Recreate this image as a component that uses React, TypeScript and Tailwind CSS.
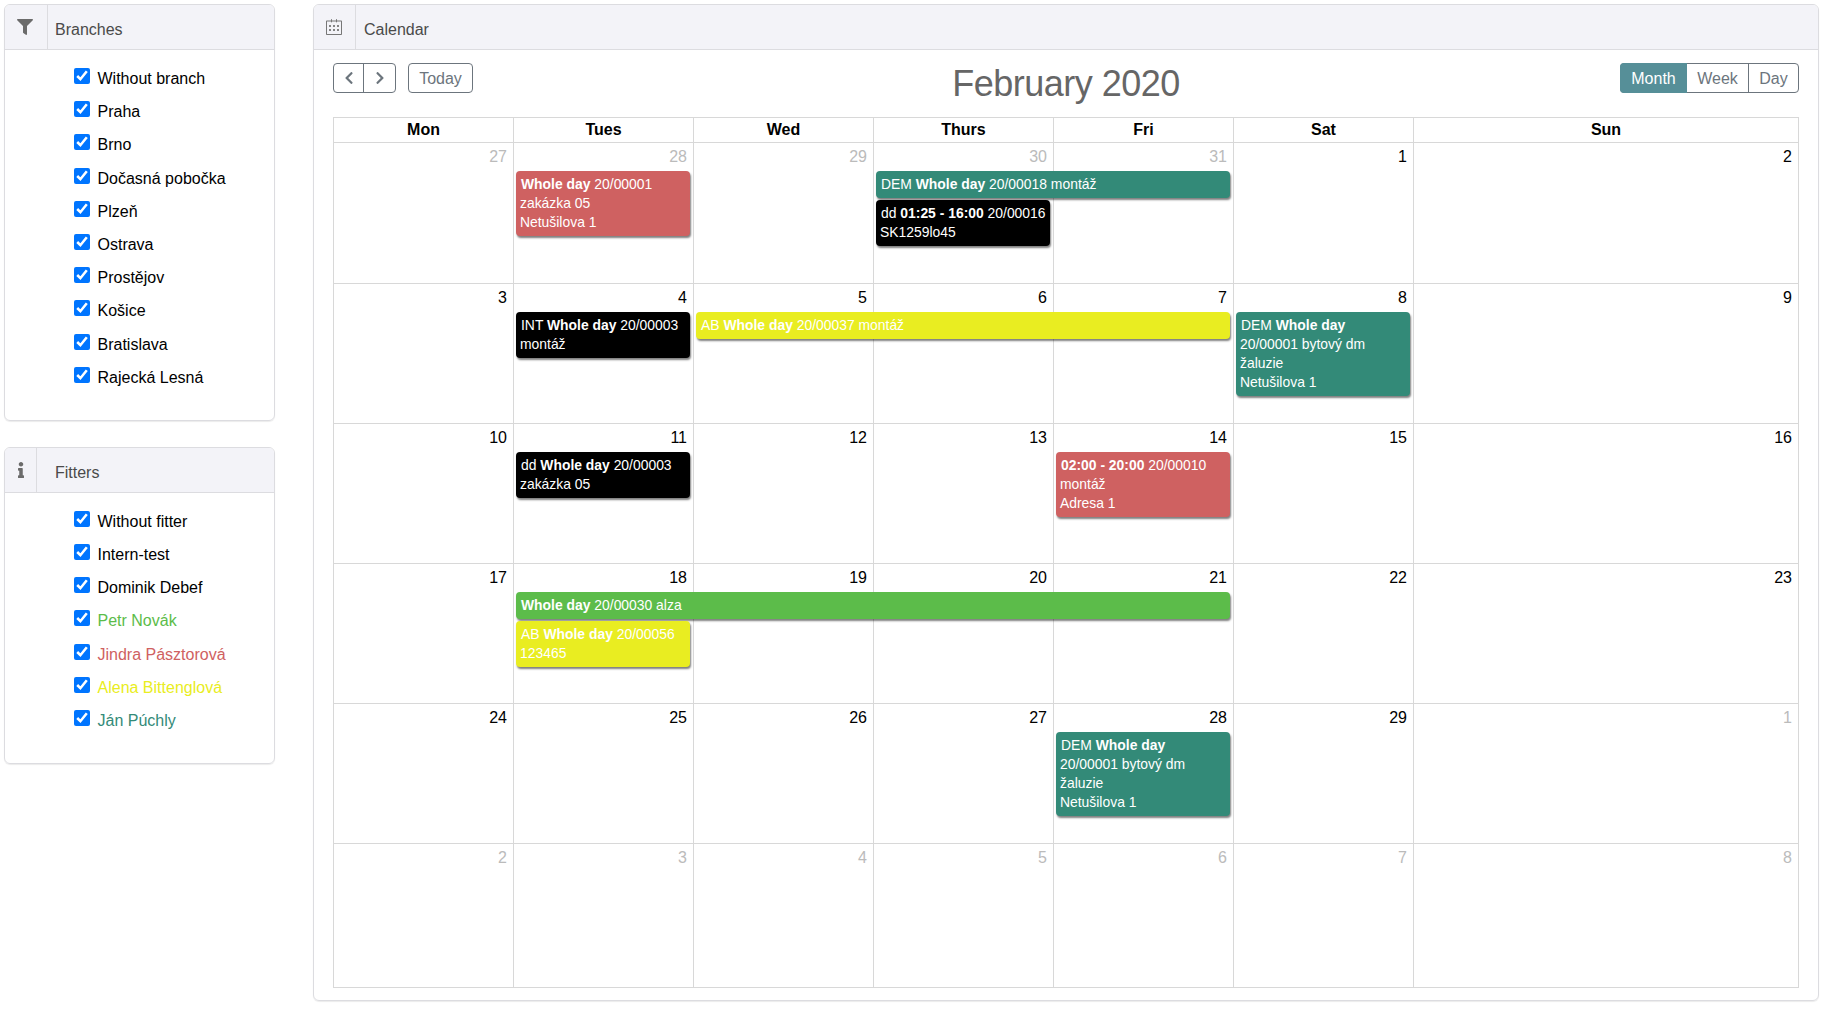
import type { ReactNode } from "react";
import { FaChevronLeft, FaChevronRight, FaFilter, FaInfo } from "react-icons/fa";
import { SlCalender } from "react-icons/sl";

const RED = "bg-[#cf6161]";
const TEAL = "bg-[#338a78]";
const BLACK = "bg-black";
const YELLOW = "bg-[#e9ed21]";
const GREEN = "bg-[#5cbc4a]";

const branches = [
  "Without branch",
  "Praha",
  "Brno",
  "Dočasná pobočka",
  "Plzeň",
  "Ostrava",
  "Prostějov",
  "Košice",
  "Bratislava",
  "Rajecká Lesná",
];

const fitters = [
  { name: "Without fitter", color: "text-black" },
  { name: "Intern-test", color: "text-black" },
  { name: "Dominik Debef", color: "text-black" },
  { name: "Petr Novák", color: "text-[#5cbc4a]" },
  { name: "Jindra Pásztorová", color: "text-[#cf6161]" },
  { name: "Alena Bittenglová", color: "text-[#e9ed21]" },
  { name: "Ján Púchly", color: "text-[#338a78]" },
];

const columns = [
  "col-start-1",
  "col-start-2",
  "col-start-3",
  "col-start-4",
  "col-start-5",
  "col-start-6",
  "col-start-7",
];

const days = ["Mon", "Tues", "Wed", "Thurs", "Fri", "Sat", "Sun"];

type CalEvent = { place: string; color: string; content: ReactNode };
type Week = { height: string; dates: { n: number; muted?: boolean }[]; events: CalEvent[] };

const range = (from: number, to: number, muted = false) =>
  Array.from({ length: to - from + 1 }, (_, i) => ({ n: from + i, muted }));

const weeks: Week[] = [
  {
    height: "h-[141px]",
    dates: [...range(27, 31, true), ...range(1, 2)],
    events: [
      {
        place: "col-start-2 col-span-1 row-start-2 row-span-2",
        color: RED,
        content: (
          <>
            <b>Whole day</b> 20/00001
            <br />
            zakázka 05
            <br />
            Netušilova 1
          </>
        ),
      },
      {
        place: "col-start-4 col-span-2 row-start-2",
        color: TEAL,
        content: (
          <>
            DEM <b>Whole day</b> 20/00018 montáž
          </>
        ),
      },
      {
        place: "col-start-4 col-span-1 row-start-3",
        color: BLACK,
        content: (
          <>
            dd <b>01:25 - 16:00</b> 20/00016
            <br />
            SK1259lo45
          </>
        ),
      },
    ],
  },
  {
    height: "h-[140px]",
    dates: range(3, 9),
    events: [
      {
        place: "col-start-2 col-span-1 row-start-2 row-span-2",
        color: BLACK,
        content: (
          <>
            INT <b>Whole day</b> 20/00003
            <br />
            montáž
          </>
        ),
      },
      {
        place: "col-start-3 col-span-3 row-start-2",
        color: YELLOW,
        content: (
          <>
            AB <b>Whole day</b> 20/00037 montáž
          </>
        ),
      },
      {
        place: "col-start-6 col-span-1 row-start-2 row-span-2",
        color: TEAL,
        content: (
          <>
            DEM <b>Whole day</b>
            <br />
            20/00001 bytový dm
            <br />
            žaluzie
            <br />
            Netušilova 1
          </>
        ),
      },
    ],
  },
  {
    height: "h-[140px]",
    dates: range(10, 16),
    events: [
      {
        place: "col-start-2 col-span-1 row-start-2",
        color: BLACK,
        content: (
          <>
            dd <b>Whole day</b> 20/00003
            <br />
            zakázka 05
          </>
        ),
      },
      {
        place: "col-start-5 col-span-1 row-start-2",
        color: RED,
        content: (
          <>
            <b>02:00 - 20:00</b> 20/00010
            <br />
            montáž
            <br />
            Adresa 1
          </>
        ),
      },
    ],
  },
  {
    height: "h-[140px]",
    dates: range(17, 23),
    events: [
      {
        place: "col-start-2 col-span-4 row-start-2",
        color: GREEN,
        content: (
          <>
            <b>Whole day</b> 20/00030 alza
          </>
        ),
      },
      {
        place: "col-start-2 col-span-1 row-start-3",
        color: YELLOW,
        content: (
          <>
            AB <b>Whole day</b> 20/00056
            <br />
            123465
          </>
        ),
      },
    ],
  },
  {
    height: "h-[140px]",
    dates: [...range(24, 29), { n: 1, muted: true }],
    events: [
      {
        place: "col-start-5 col-span-1 row-start-2",
        color: TEAL,
        content: (
          <>
            DEM <b>Whole day</b>
            <br />
            20/00001 bytový dm
            <br />
            žaluzie
            <br />
            Netušilova 1
          </>
        ),
      },
    ],
  },
  {
    height: "h-[144px]",
    dates: range(2, 8, true),
    events: [],
  },
];

function CardHeader({ icon, title, divider }: { icon: ReactNode; title: string; divider: string }) {
  return (
    <div className="flex h-[45px] items-stretch rounded-t-[5px] border-b border-[#dcdce0] bg-[#f3f3f8]">
      <div className={`flex items-center justify-center border-r border-[#dcdce0] ${divider}`}>{icon}</div>
      <div className="flex-1 self-center pt-[6px] leading-6 text-[#4a4a4a]">{title}</div>
    </div>
  );
}

function CheckRow({ label, color }: { label: string; color: string }) {
  return (
    <label className="flex h-[33.2px] pl-[69px]">
      <input type="checkbox" defaultChecked className="mt-[2px] h-4 w-4 shrink-0 accent-[#0075ff]" />
      <span className={`ml-[7.5px] pt-px leading-6 ${color}`}>{label}</span>
    </label>
  );
}

function WeekRow({ week }: { week: Week }) {
  return (
    <div className={`grid grid-cols-[repeat(6,180px)_1fr] grid-rows-[29px_auto_auto_1fr] ${week.height}`}>
      {columns.map((col) => (
        <div key={col} className={`${col} row-span-full row-start-1 border-t border-l border-[#d8d8d8]`} />
      ))}
      {week.dates.map((d, i) => (
        <div
          key={i}
          className={`${columns[i]} row-start-1 pt-[3px] pr-[6px] text-right leading-6 ${
            d.muted ? "text-[#bbbbbb]" : "text-black"
          }`}
        >
          {d.n}
        </div>
      ))}
      {week.events.map((e, i) => (
        <div
          key={i}
          className={`${e.place} ${e.color} mr-[3px] mb-[2px] ml-[3px] self-start rounded-[4px] px-1 pt-[3.5px] pb-[4.5px] indent-[1px] text-[13.9px] leading-[19px] text-white shadow-[1px_2px_2px_rgba(0,0,0,0.5)]`}
        >
          {e.content}
        </div>
      ))}
    </div>
  );
}

export default function App() {
  return (
    <div className="flex min-h-[1010px] bg-white pt-1 pl-1 font-['Liberation_Sans',Arial,sans-serif] text-base text-black">
      {/* Sidebar */}
      <div className="w-[271px] shrink-0">
        <section className="rounded-[6px] border border-[#dcdce0] pb-[22px] shadow-[0_1px_1px_rgba(0,0,0,0.08)]">
          <CardHeader
            icon={<FaFilter className="mr-[2px] h-4 w-4 text-[#6b6b6b]" />}
            title="Branches"
            divider="mr-[7px] w-[43px]"
          />
          <div className="pt-[16px]">
            {branches.map((b) => (
              <CheckRow key={b} label={b} color="text-black" />
            ))}
          </div>
        </section>

        <section className="mt-[26px] rounded-[6px] border border-[#dcdce0] pb-[22px] shadow-[0_1px_1px_rgba(0,0,0,0.08)]">
          <CardHeader
            icon={<FaInfo className="h-4 w-4 text-[#6b6b6b]" />}
            title="Fitters"
            divider="mr-[18px] w-[32px]"
          />
          <div className="pt-[16px]">
            {fitters.map((f) => (
              <CheckRow key={f.name} label={f.name} color={f.color} />
            ))}
          </div>
        </section>
      </div>

      {/* Calendar */}
      <section className="ml-[38px] h-[997px] w-[1506px] shrink-0 rounded-[6px] border border-[#dcdce0] shadow-[0_1px_1px_rgba(0,0,0,0.08)]">
        <CardHeader
          icon={<SlCalender className="mr-[2px] h-4 w-4 text-[#777]" />}
          title="Calendar"
          divider="mr-[8px] w-[42px]"
        />
        <div className="px-[19px] pt-[13px]">
          <div className="grid h-[54px] grid-cols-3 items-start">
            <div className="flex gap-3">
              <div className="flex h-[30px] rounded-[4px] border border-[#6c757d] text-[#6c757d]">
                <button className="flex w-[29px] items-center justify-center">
                  <FaChevronLeft className="h-[14px] w-[14px]" />
                </button>
                <button className="flex w-[32px] items-center justify-center border-l border-[#6c757d]">
                  <FaChevronRight className="h-[14px] w-[14px]" />
                </button>
              </div>
              <button className="h-[30px] w-[65px] rounded-[4px] border border-[#6c757d] pt-[2px] leading-6 text-[#6c757d]">
                Today
              </button>
            </div>
            <h2 className="pt-[2px] text-center text-[36px] leading-[38px] tracking-[-0.5px] whitespace-nowrap text-[#666]">
              February 2020
            </h2>
            <div className="flex justify-end">
              <div className="flex h-[30px] rounded-[4px] border border-[#6c757d] text-[#6c757d]">
                <button className="-my-px -ml-px w-[67px] rounded-l-[4px] bg-[#568f98] pt-[2px] text-white">Month</button>
                <button className="w-[61px] pt-[2px]">Week</button>
                <button className="w-[50px] border-l border-[#6c757d] pt-[2px]">Day</button>
              </div>
            </div>
          </div>

          <div className="w-[1466px] border-r border-b border-[#d8d8d8]">
            <div className="grid h-[25px] grid-cols-[repeat(6,180px)_1fr]">
              {days.map((d) => (
                <div key={d} className="border-t border-l border-[#d8d8d8] text-center leading-6 font-bold text-black">
                  {d}
                </div>
              ))}
            </div>
            {weeks.map((w, i) => (
              <WeekRow key={i} week={w} />
            ))}
          </div>
        </div>
      </section>
    </div>
  );
}
